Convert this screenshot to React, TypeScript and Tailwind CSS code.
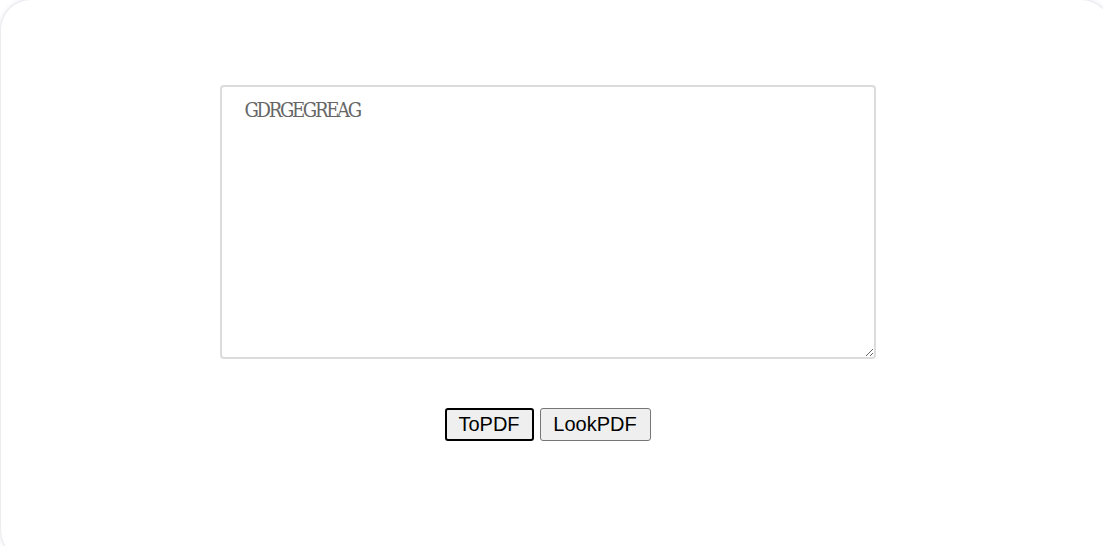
import React from "react";

export default function App() {
  return (
    <div className="w-[1103px] h-[546px] overflow-hidden bg-white">
      <div className="ml-[1px] w-[1110px] h-[560px] rounded-[30px] bg-white shadow-[0_0_4px_rgba(70,70,110,0.25)] flex flex-col items-center pr-[17px] pt-[85px]">
        <textarea
          defaultValue="GDRGEGREAG"
          className="w-[656px] h-[274px] border-2 border-[#dcdcdc] rounded-[4px] bg-white pl-[23px] pr-[22px] py-[8px] text-[20px] font-stretch-condensed tracking-[-2.3px] text-[#666] outline-none"
          style={{ fontFamily: '"DejaVu Serif", serif' }}
        />
        <div className="mt-[49px] flex gap-[6px]" style={{ fontFamily: '"Liberation Sans", Arial, sans-serif' }}>
          <button className="w-[89px] h-[33px] border-2 border-black rounded-[3px] bg-[#efefef] text-[20px] leading-[23px] text-black">
            ToPDF
          </button>
          <button className="w-[111px] h-[33px] border border-[#767676] rounded-[3px] bg-[#efefef] text-[20px] leading-[23px] text-black">
            LookPDF
          </button>
        </div>
      </div>
    </div>
  );
}
